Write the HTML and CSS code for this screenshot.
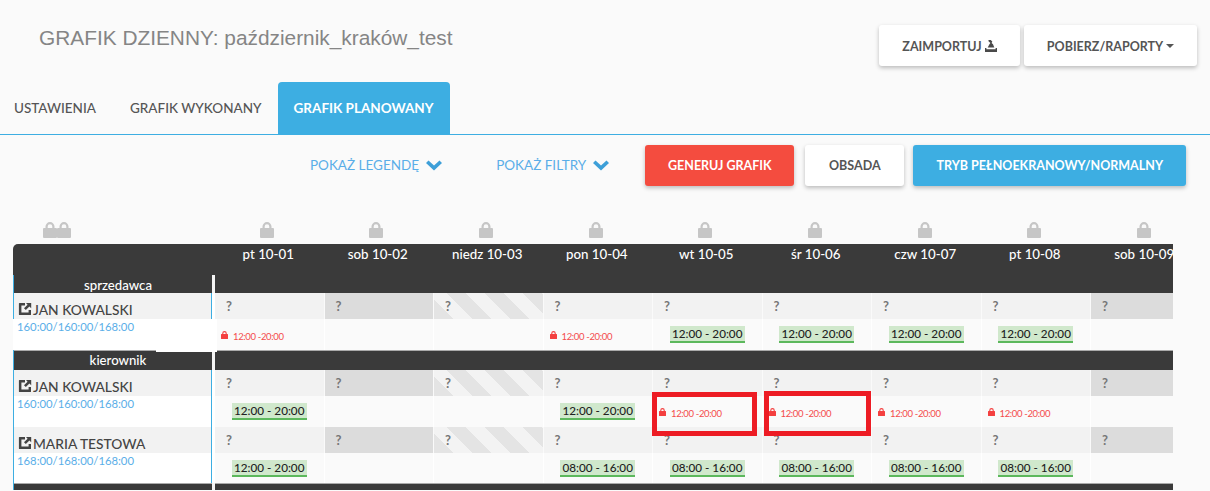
FILE: index.html
```html
<!DOCTYPE html>
<html lang="pl">
<head>
<meta charset="utf-8">
<title>Grafik dzienny</title>
<link rel="stylesheet" href="styles.css">
</head>
<body>
<svg class="defs" width="0" height="0" aria-hidden="true">
  <symbol id="lock" viewBox="0 0 14 16"><path d="M2.5 6V4.6a4.5 4.5 0 0 1 9 0V6h1.5a1 1 0 0 1 1 1v8a1 1 0 0 1-1 1H1a1 1 0 0 1-1-1V7a1 1 0 0 1 1-1zm2.2 0h4.6V4.6a2.3 2.3 0 0 0-4.6 0z"/></symbol>
  <symbol id="ext" viewBox="0 0 14 14"><path d="M1.5 1H7v2.4H3.4v7.2h7.2V8H13v4.5a.6.6 0 0 1-.6.6H1.5a.6.6 0 0 1-.6-.6V1.6A.6.6 0 0 1 1.5 1zM8 1h5.2v5.2l-1.8-1.8-3.6 3.7-1.8-1.8 3.6-3.6z"/></symbol>
  <symbol id="chev" viewBox="0 0 16 11"><path d="M0 3l2.5-2.5L8 5.5l5.5-5L16 3 8 10.5z"/></symbol>
</svg>

<header class="top">
  <h1 class="title">GRAFIK DZIENNY: październik_kraków_test</h1>
  <div class="top-actions">
    <button class="btn btn-white btn-import">ZAIMPORTUJ
      <svg class="import-ico" viewBox="0 0 12 12"><path d="M3.5 0h2.2l1.6 1.6L6.6 3 8 4.2 9.3 7.5H2.7L4.4 4.2 5.4 3 3.5 1.2zM0 8h1.4v1.2h9.2V8H12v4H0z"/></svg>
    </button>
    <button class="btn btn-white btn-report">POBIERZ/RAPORTY <span class="caret"></span></button>
  </div>
</header>

<nav class="tabs">
  <a class="tab">USTAWIENIA</a>
  <a class="tab">GRAFIK WYKONANY</a>
  <a class="tab tab-active">GRAFIK PLANOWANY</a>
</nav>

<section class="toolbar">
  <a class="toggle toggle-legend">POKAŻ LEGENDĘ <svg class="chev"><use href="#chev"/></svg></a>
  <a class="toggle toggle-filters">POKAŻ FILTRY <svg class="chev"><use href="#chev"/></svg></a>
  <button class="btn btn-red">GENERUJ GRAFIK</button>
  <button class="btn btn-white btn-obsada">OBSADA</button>
  <button class="btn btn-blue">TRYB PEŁNOEKRANOWY/NORMALNY</button>
</section>

<div class="locks">
  <div class="locks-first"><svg class="lock-g"><use href="#lock"/></svg><svg class="lock-g"><use href="#lock"/></svg></div>
  <div><svg class="lock-g"><use href="#lock"/></svg></div>
  <div><svg class="lock-g"><use href="#lock"/></svg></div>
  <div><svg class="lock-g"><use href="#lock"/></svg></div>
  <div><svg class="lock-g"><use href="#lock"/></svg></div>
  <div><svg class="lock-g"><use href="#lock"/></svg></div>
  <div><svg class="lock-g"><use href="#lock"/></svg></div>
  <div><svg class="lock-g"><use href="#lock"/></svg></div>
  <div><svg class="lock-g"><use href="#lock"/></svg></div>
  <div><svg class="lock-g"><use href="#lock"/></svg></div>
</div>

<main class="schedule">
  <div class="row row-head">
    <div class="corner"></div>
    <div class="day">pt 10-01</div><div class="day">sob 10-02</div><div class="day">niedz 10-03</div>
    <div class="day">pon 10-04</div><div class="day">wt 10-05</div><div class="day">śr 10-06</div>
    <div class="day">czw 10-07</div><div class="day">pt 10-08</div><div class="day">sob 10-09</div>
  </div>

  <div class="row row-section row-section-first"><div class="section-name">sprzedawca</div><div class="section-rest"></div></div>
  <div class="row emp">
    <div class="person">
      <div class="person-name"><svg class="ext"><use href="#ext"/></svg>JAN KOWALSKI</div>
      <span class="patch"></span>
      <div class="person-hours">160:00/160:00/168:00</div>
    </div>
    <div class="q">?</div><div class="q q-off">?</div><div class="q q-hol">?</div><div class="q">?</div><div class="q">?</div><div class="q">?</div><div class="q">?</div><div class="q">?</div><div class="q q-off">?</div>
    <div class="c"><span class="locked"><svg class="lock-r"><use href="#lock"/></svg>12:00 -20:00</span></div>
    <div class="c"></div><div class="c"></div>
    <div class="c"><span class="locked"><svg class="lock-r"><use href="#lock"/></svg>12:00 -20:00</span></div>
    <div class="c"><span class="shift">12:00 - 20:00</span></div>
    <div class="c"><span class="shift">12:00 - 20:00</span></div>
    <div class="c"><span class="shift">12:00 - 20:00</span></div>
    <div class="c"><span class="shift">12:00 - 20:00</span></div>
    <div class="c"></div>
  </div>

  <div class="row row-section"><div class="section-name">kierownik</div><div class="section-rest"></div></div>
  <div class="row emp emp-second">
    <div class="person">
      <div class="person-name"><svg class="ext"><use href="#ext"/></svg>JAN KOWALSKI</div>
      <div class="person-hours">160:00/160:00/168:00</div>
    </div>
    <div class="q">?</div><div class="q q-off">?</div><div class="q q-hol">?</div><div class="q">?</div><div class="q">?</div><div class="q">?</div><div class="q">?</div><div class="q">?</div><div class="q q-off">?</div>
    <div class="c"><span class="shift">12:00 - 20:00</span></div>
    <div class="c"></div><div class="c"></div>
    <div class="c"><span class="shift">12:00 - 20:00</span></div>
    <div class="c"><span class="locked"><svg class="lock-r"><use href="#lock"/></svg>12:00 -20:00</span><span class="mark mark-a"></span></div>
    <div class="c"><span class="locked"><svg class="lock-r"><use href="#lock"/></svg>12:00 -20:00</span><span class="mark mark-b"></span></div>
    <div class="c"><span class="locked"><svg class="lock-r"><use href="#lock"/></svg>12:00 -20:00</span></div>
    <div class="c"><span class="locked"><svg class="lock-r"><use href="#lock"/></svg>12:00 -20:00</span></div>
    <div class="c"></div>
  </div>
  <div class="row emp emp-third">
    <div class="person">
      <div class="person-name"><svg class="ext"><use href="#ext"/></svg>MARIA TESTOWA</div>
      <div class="person-hours">168:00/168:00/168:00</div>
    </div>
    <div class="q">?</div><div class="q q-off">?</div><div class="q q-hol">?</div><div class="q">?</div><div class="q">?</div><div class="q">?</div><div class="q">?</div><div class="q">?</div><div class="q q-off">?</div>
    <div class="c"><span class="shift">12:00 - 20:00</span></div>
    <div class="c"></div><div class="c"></div>
    <div class="c"><span class="shift">08:00 - 16:00</span></div>
    <div class="c"><span class="shift">08:00 - 16:00</span></div>
    <div class="c"><span class="shift">08:00 - 16:00</span></div>
    <div class="c"><span class="shift">08:00 - 16:00</span></div>
    <div class="c"><span class="shift">08:00 - 16:00</span></div>
    <div class="c"></div>
  </div>
  <div class="row row-section row-section-last"><div class="section-name"></div><div class="section-rest"></div></div>
</main>
</body>
</html>
```
FILE: styles.css
```css
* { box-sizing: border-box; }
html, body { height: 491px; overflow: hidden; }
body { margin: 0; background: #fafafa; font-family: Lato, sans-serif; color: #555; }
.defs { position: absolute; }

.top { height: 82px; display: flex; justify-content: space-between; padding: 25px 13px 0 39px; }
.title { margin: 0; font: 400 20.85px/26px "Liberation Sans", Arial, sans-serif; color: #858585; }
.top-actions { display: flex; gap: 4px; height: 41px; }
.top-actions .btn { padding-top: 1px; }

.btn { border: 0; border-radius: 3px; height: 41px; font: 700 12.5px Lato, sans-serif; padding: 0; box-shadow: 0 2px 4px rgba(0,0,0,.25); display: inline-flex; align-items: center; justify-content: center; gap: 3px; }
.btn-white { background: #fff; color: #555; }
.btn-red { background: #f44c3f; color: #fff; width: 149px; margin-right: 11px; }
.btn-blue { background: #3daee2; color: #fff; width: 273px; }
.btn-import { width: 141px; }
.btn-report { width: 173px; }
.btn-obsada { width: 99px; margin-right: 9px; }
.import-ico { width: 12px; height: 12px; fill: #4a4a4a; }
.caret { display: inline-block; border: 4px solid transparent; border-top-color: #555; border-bottom: 0; }

.tabs { height: 53px; display: flex; border-bottom: 1px solid #3daee2; padding-left: 14px; }
.tab { font-size: 13.5px; font-weight: 500; color: #555; line-height: 52px; margin-right: 34px; }
.tab-active { background: #3daee2; color: #fff; font-weight: 700; padding: 0 16px; margin-left: -18px; margin-right: 0; border-radius: 4px 4px 0 0; height: 53px; }

.toolbar { height: 52px; display: flex; align-items: center; padding: 9px 0 0 310px; }
.toggle { font-size: 13.5px; color: #5aaee8; display: flex; align-items: center; gap: 7px; margin-top: -2px; }
.toggle-legend { margin-right: 54px; }
.toggle-filters { margin-right: 36px; }
.chev { width: 16px; height: 11px; fill: #3d9fd8; margin-top: 2px; }

.locks { height: 57px; display: grid; grid-template-columns: 202px repeat(9, 109.65px); padding: 35px 0 0 13px; width: 1173px; overflow: hidden; }
.locks > div { display: flex; justify-content: center; padding-right: 6px; }
.locks > .locks-first { justify-content: flex-start; padding: 0 0 0 30px; }
.lock-g { width: 14px; height: 16px; fill: #c6c6c6; }

.schedule { margin-left: 13px; width: 1160px; overflow: hidden; border-radius: 5px 0 0 0; position: relative; }
.row { display: grid; grid-template-columns: 202px repeat(9, 109.5px); width: 1188px; }
.row-head { background: #3a3a3a; height: 31px; }
.day { color: #fff; font-size: 13.3px; font-weight: 500; text-align: center; padding: 1px 3px 0 0; line-height: 18px; white-space: nowrap; }

.row-section { background: #3a3a3a; height: 20px; box-shadow: inset 0 1px 0 #aaa; }
.row-section-first { height: 18px; box-shadow: none; }
.row-section-last { height: 7px; }
.section-name { color: #fff; font-size: 13.2px; font-weight: 500; line-height: 20px; text-align: center; border-left: 1px solid #3daee2; border-right: 3px solid #f4f4f4; padding-left: 10px; }
.section-rest { grid-column: 2 / -1; }

.emp { grid-template-rows: 26px 31px; }
.emp-third { grid-template-rows: 26px 30px; }
.person { grid-row: 1 / 3; grid-column: 1; background: #fff; border-left: 1px solid #3daee2; border-right: 3px solid #fff; position: relative; }
.person::after { content: ""; position: absolute; right: 0; top: 0; bottom: 0; width: 1px; background: #3daee2; }
.person-name { background: #f2f2f2; height: 26px; font-size: 13.8px; font-weight: 500; color: #444; display: flex; align-items: center; gap: 1px; padding: 6px 0 0 4px; white-space: nowrap; }
.ext { width: 14px; height: 14px; fill: #444; flex: none; }
.person-hours { font-size: 11.3px; color: #5aaee8; padding: 1px 0 0 3px; line-height: 14px; position: relative; z-index: 2; }
.patch { position: absolute; left: -1px; top: 26px; width: 204px; height: 31px; background: #fff; z-index: 1; }
.patch::after { content: ""; position: absolute; left: 143px; top: 31px; width: 61px; height: 2px; background: #fff; }

.q { background: #f2f2f2; color: #777; font-size: 13px; font-weight: 700; padding: 5px 0 0 11px; line-height: 16px; border-right: 1px solid #fafafa; }
.q-off { background: #dcdcdc; }
.q-hol { background: repeating-linear-gradient(45deg, #e4e4e4 0 13.5px, #f3f3f3 13.5px 27px); }
.c { background: #fafafa; border-right: 1px solid #fff; display: flex; align-items: center; justify-content: center; position: relative; }
.shift { background: #d0e8cc; border-bottom: 2px solid #5cb85c; color: #222; font-size: 11.7px; font-weight: 500; line-height: 15px; padding: 0 2.5px; white-space: nowrap; }
.locked { color: #f44c4c; font-size: 9.5px; letter-spacing: -.35px; position: absolute; left: 6px; top: 11px; white-space: nowrap; display: flex; align-items: flex-start; gap: 5px; line-height: 14px; }
.lock-r { width: 7px; height: 8px; fill: #f44040; margin-top: 1px; }
.mark { position: absolute; top: -4px; height: 44px; border: 5px solid #ed1c24; }
.mark-a { left: -1px; width: 105px; }
.mark-b { left: 1px; top: -5px; height: 45px; width: 107px; }
```
